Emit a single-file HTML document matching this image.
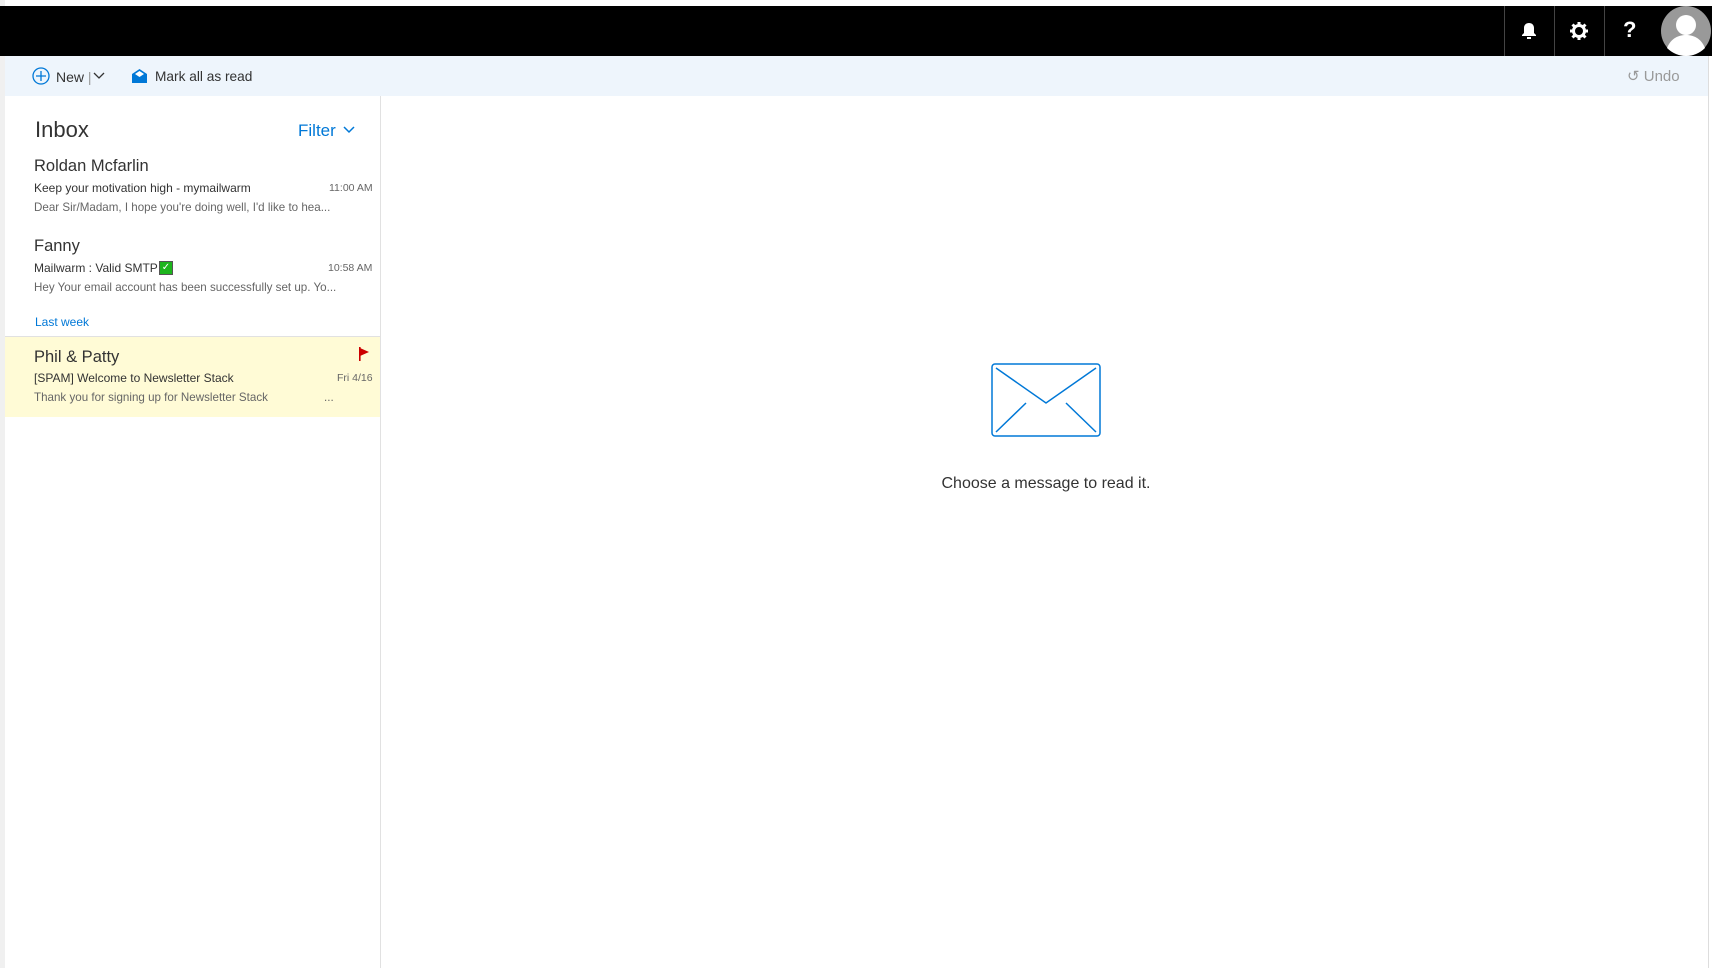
<!DOCTYPE html><html><head><style>
body{margin:0;width:1712px;height:968px;overflow:hidden;background:#fff;font-family:"Liberation Sans",sans-serif;position:relative}
.a{position:absolute;white-space:nowrap}
.top{left:0;top:6px;width:1712px;height:50px;background:#000}
.sep{top:6px;width:1px;height:50px;background:#444}
.tb{left:5px;top:56px;width:1703px;height:40px;background:#eef5fc}
.pane{left:5px;top:96px;width:375px;height:872px;border-right:1px solid #e1e1e1}
.n{font-size:16.5px;color:#333}
.s{font-size:12px;color:#333}
.p{font-size:11.6px;color:#666}
.t{font-size:10.5px;color:#666}
</style></head><body>
<div class="a" style="left:0;top:0;width:5px;height:968px;background:#f0f0f0"></div>
<div class="a top"></div>
<div class="a sep" style="left:1504px"></div><div class="a sep" style="left:1554px"></div><div class="a sep" style="left:1604px"></div>
<svg class="a" style="left:1521px;top:22px" width="16" height="18" viewBox="0 0 16 18"><path d="M8 1c-3 0-5 2-5 5v5l-2 2v1h14v-1l-2-2V6c0-3-2-5-5-5z" fill="#fff"/><rect x="6" y="15" width="4" height="2" fill="#fff"/></svg>
<svg class="a" style="left:1570px;top:22px" width="18" height="18" viewBox="0 0 18 18"><circle cx="9" cy="9" r="5.5" fill="none" stroke="#fff" stroke-width="3"/><g stroke="#fff" stroke-width="3"><path d="M9 0v4M9 14v4M0 9h4M14 9h4M2.5 2.5l3 3M12.5 12.5l3 3M2.5 15.5l3-3M12.5 5.5l3-3"/></g></svg>
<div class="a" style="left:1623px;top:17px;color:#fff;font-weight:bold;font-size:22px">?</div>
<svg class="a" style="left:1659px;top:6px" width="53" height="50" viewBox="0 0 53 50"><circle cx="27" cy="25" r="25" fill="#999"/><circle cx="27" cy="19" r="10" fill="#fff"/><path d="M8 42c4-10 12-13 19-13s15 3 19 13c-5 5-12 8-19 8s-14-3-19-8z" fill="#fff"/></svg>
<div class="a tb"></div>
<svg class="a" style="left:32px;top:67px" width="18" height="18" viewBox="0 0 18 18"><circle cx="9" cy="9" r="8" fill="none" stroke="#0078d7" stroke-width="1.3"/><path d="M9 4v10M4 9h10" stroke="#0078d7" stroke-width="1.3"/></svg>
<div class="a" style="left:56px;top:69px;font-size:14px;color:#333">New <span style="color:#999">|</span></div>
<svg class="a" style="left:93px;top:72px" width="12" height="8"><path d="M1 1l5 5 5-5" fill="none" stroke="#333" stroke-width="1.3"/></svg>
<svg class="a" style="left:131px;top:68px" width="17" height="16" viewBox="0 0 17 16"><path d="M1 6l7.5-5 7.5 5v9H1z" fill="#0078d7"/><path d="M4 6l4.5-3 4.5 3-4.5 3z" fill="#fff"/></svg>
<div class="a" style="left:155px;top:69px;font-size:13.7px;color:#333">Mark all as read</div>
<div class="a" style="left:1627px;top:67px;font-size:15px;color:#999">↺ Undo</div>
<div class="a pane"></div>
<div class="a" style="left:35px;top:117px;font-size:22px;color:#333">Inbox</div>
<div class="a" style="left:298px;top:121px;font-size:17px;color:#0078d7">Filter</div>
<svg class="a" style="left:343px;top:126px" width="12" height="8"><path d="M1 1l5 5 5-5" fill="none" stroke="#0078d7" stroke-width="1.5"/></svg>
<div class="a n" style="left:34px;top:157px">Roldan Mcfarlin</div>
<div class="a s" style="left:34px;top:181px">Keep your motivation high - mymailwarm</div>
<div class="a t" style="left:329px;top:182px">11:00 AM</div>
<div class="a p" style="left:34px;top:201px">Dear Sir/Madam, I hope you're doing well, I'd like to hea...</div>
<div class="a n" style="left:34px;top:237px">Fanny</div>
<div class="a s" style="left:34px;top:261px">Mailwarm : Valid SMTP</div>
<div class="a" style="left:159px;top:261px;width:12px;height:12px;background:#1db51d;border:1px solid #555;color:#fff;font-size:10px;line-height:12px;text-align:center">✓</div>
<div class="a t" style="left:328px;top:262px">10:58 AM</div>
<div class="a p" style="left:34px;top:281px">Hey Your email account has been successfully set up. Yo...</div>
<div class="a" style="left:35px;top:315px;font-size:12px;color:#0078d7">Last week</div>
<div class="a" style="left:5px;top:336px;width:375px;height:80px;background:#fffbd6;border-top:1px solid #e1e1e1"></div>
<div class="a n" style="left:34px;top:348px">Phil &amp; Patty</div>
<svg class="a" style="left:358px;top:347px" width="12" height="14"><rect x="1" y="0" width="1.6" height="14" fill="#c00"/><path d="M2 1l9 4-9 4z" fill="#c00"/></svg>
<div class="a s" style="left:34px;top:371px">[SPAM] Welcome to Newsletter Stack</div>
<div class="a t" style="left:337px;top:372px">Fri 4/16</div>
<div class="a p" style="left:34px;top:391px">Thank you for signing up for Newsletter Stack</div>
<div class="a p" style="left:324px;top:391px">...</div>
<svg class="a" style="left:991px;top:363px" width="110" height="74" viewBox="0 0 110 74"><rect x="1" y="1" width="108" height="72" rx="3" fill="none" stroke="#0078d7" stroke-width="1.5"/><path d="M5 5l50 35 50-35M5 69l30-29M105 69l-30-29" fill="none" stroke="#0078d7" stroke-width="1.5"/></svg>
<div class="a" style="left:941px;top:475px;width:210px;text-align:center;font-size:16px;color:#333">Choose a message to read it.</div>
<div class="a" style="left:1708px;top:56px;width:1px;height:912px;background:#ddd"></div>
</body></html>
